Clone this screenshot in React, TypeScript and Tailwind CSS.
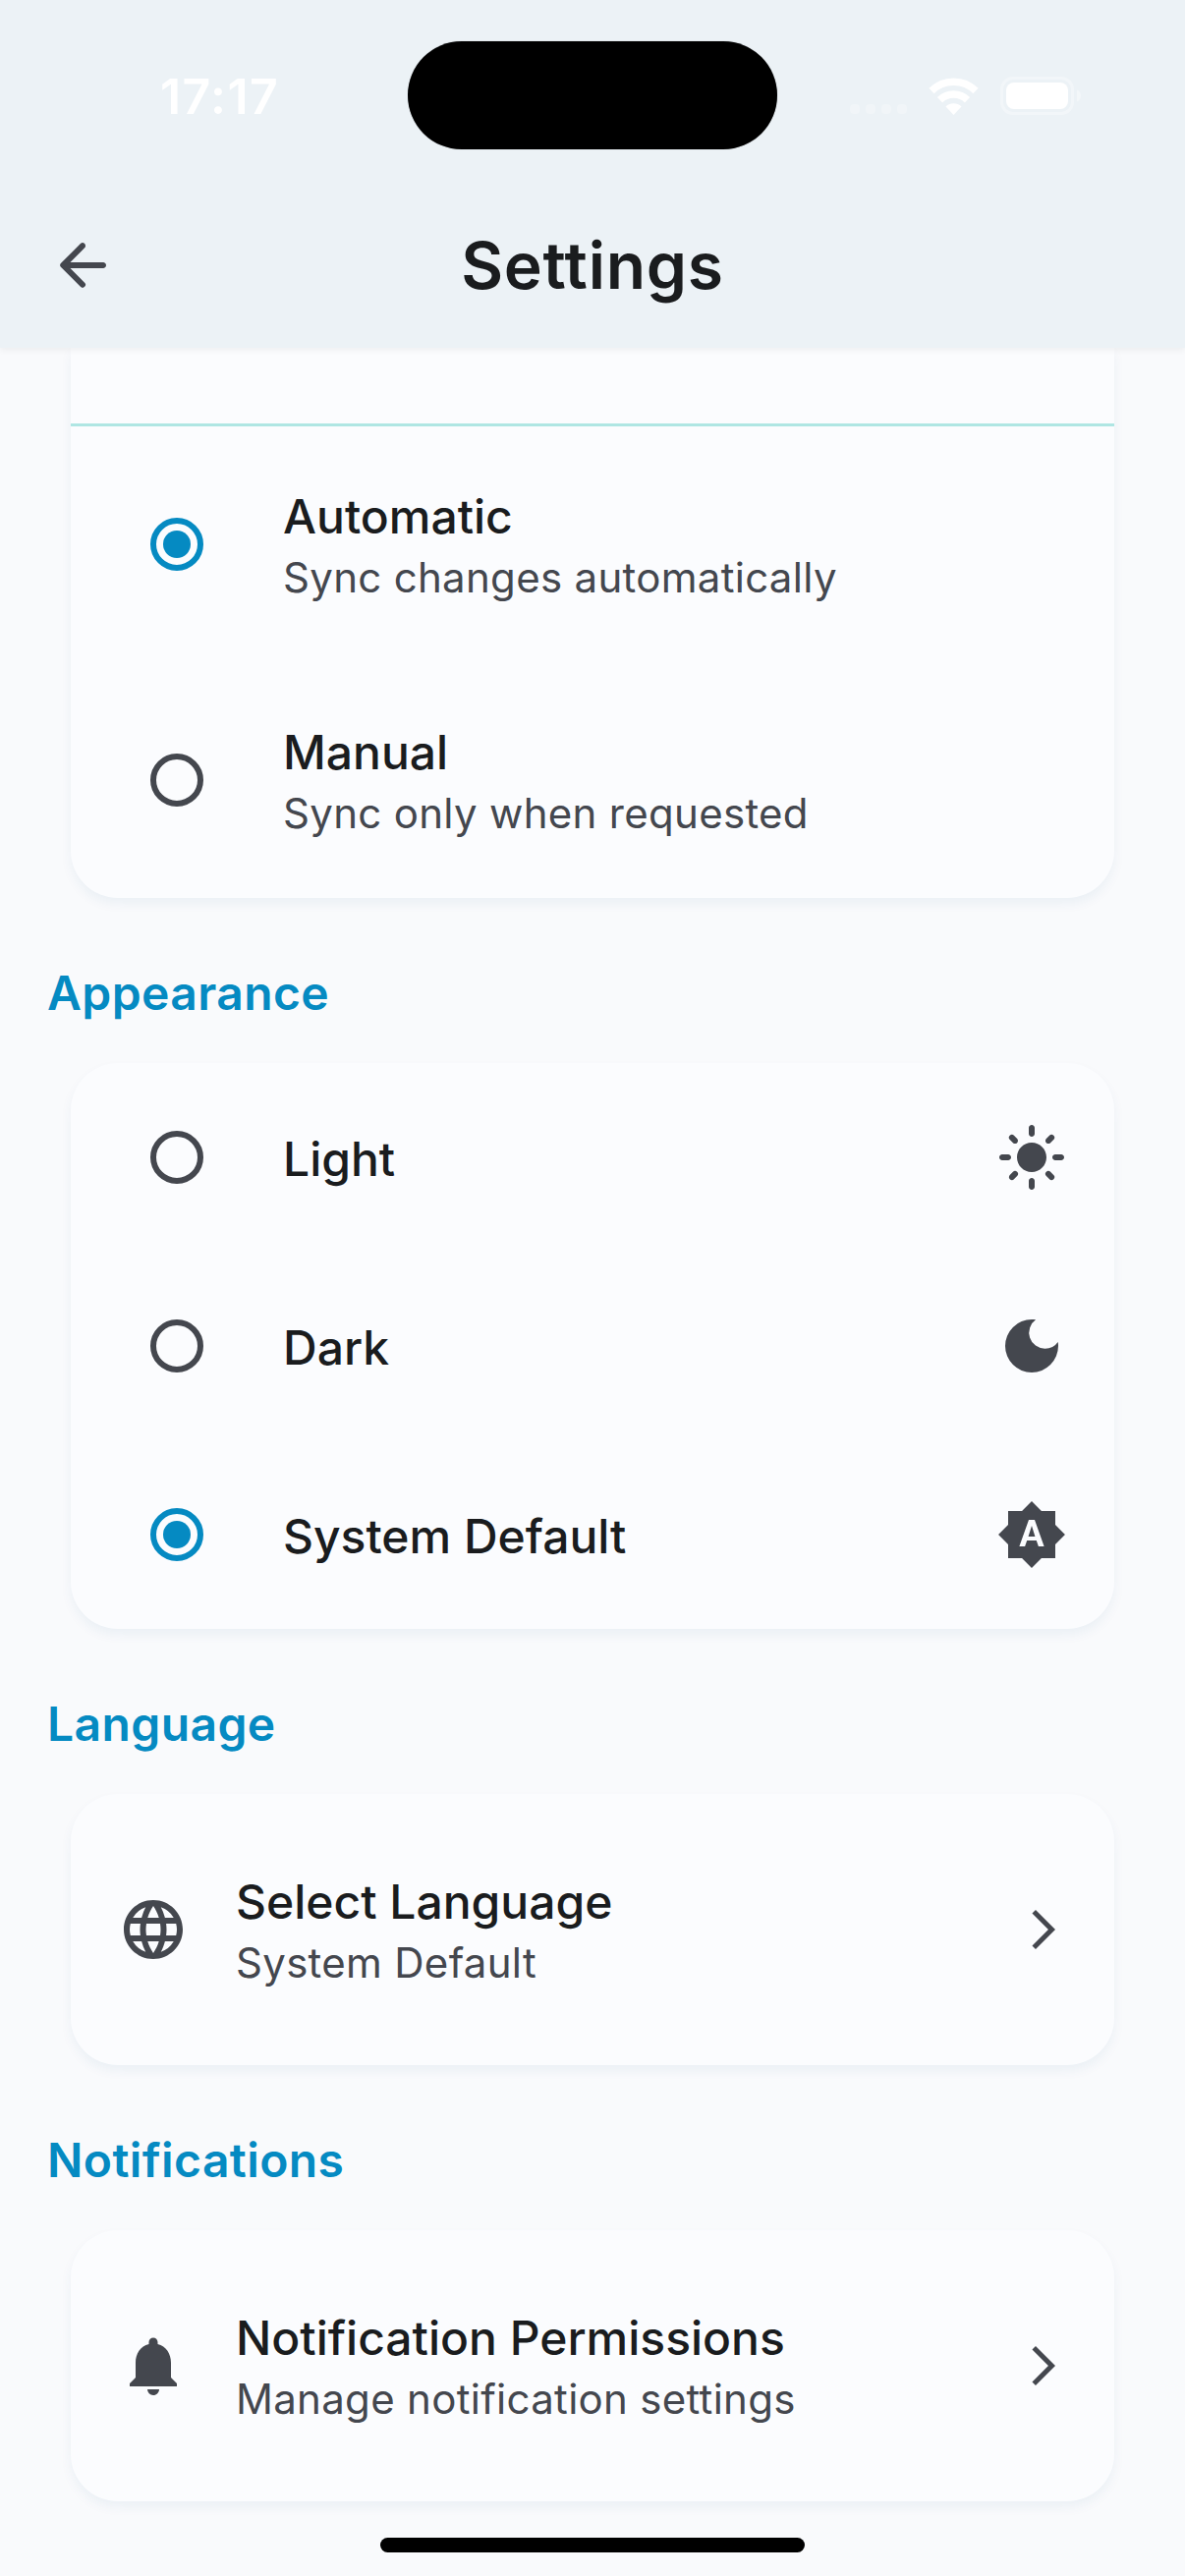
import React from "react";
import {
  MdArrowForwardIos,
  MdBrightnessAuto,
  MdDarkMode,
  MdLanguage,
  MdLightMode,
  MdNotifications,
} from "react-icons/md";

function StatusBar() {
  return (
    <div className="relative h-[186px]">
      <div className="flex h-full items-start justify-between pl-[163px] pr-[105px]">
        <div className="mt-[68px] text-[50px] font-semibold leading-[60px] tracking-[1.4px] text-white">17:17</div>
        <div className="mt-[78px] flex h-[39px] items-center">
          <div className="mt-[27px] flex gap-[6px]">
            {[0, 1, 2, 3].map((i) => (
              <span key={i} className="size-[10px] rounded-[4px] bg-white/25" />
            ))}
          </div>
          <svg className="ml-[22px] h-[38px] w-[51px]" viewBox="0 0 51 38" fill="none">
            <path d="M3 14.5a32 32 0 0 1 45 0" stroke="#fff" strokeWidth="7.5" transform="translate(0 -1)" />
            <path d="M11.5 23.2a20 20 0 0 1 28 0" stroke="#fff" strokeWidth="7.5" transform="translate(0 -.5)" />
            <path d="M17.5 29.5a11.5 11.5 0 0 1 16 0L25.5 38z" fill="#fff" />
          </svg>
          <svg className="ml-[22px] h-[39px] w-[83px]" viewBox="0 0 83 39" fill="none">
            <rect x="1.5" y="1.5" width="72" height="36" rx="11.5" stroke="#fff" strokeOpacity=".35" strokeWidth="3" />
            <rect x="6" y="6" width="63" height="27" rx="8" fill="#fff" />
            <path d="M78 13.5c2.600.9 4 3.300 4 6s-1.400 5.100-4 6z" fill="#fff" fillOpacity=".4" />
          </svg>
        </div>
      </div>
      <div className="absolute left-[415px] top-[42px] h-[110px] w-[376px] rounded-full bg-black shadow-[0_0_1px_rgba(0,0,0,0.4)]" />
    </div>
  );
}

function Header() {
  return (
    <header className="relative z-10 h-[354px] shrink-0 bg-[#ecf2f6] shadow-[0_2px_7px_rgba(0,0,0,0.06)]">
      <StatusBar />
      <div className="grid h-[168px] grid-cols-[72px_1fr_72px] items-center px-12">
        <svg className="size-[72px] text-[#44474e]" viewBox="0 0 24 24" fill="currentColor">
          <path d="M19 11H7.830l4.880-4.880c.39-.39.39-1.030 0-1.420a.996.996 0 0 0-1.410 0l-6.590 6.590a.996.996 0 0 0 0 1.410l6.590 6.590a.996.996 0 1 0 1.410-1.410L7.830 13H19c.55 0 1-.45 1-1s-.45-1-1-1z" />
        </svg>
        <h1 className="text-center text-[66px] font-semibold leading-[84px] tracking-[0.75px] text-[#1a1c1e]">
          Settings
        </h1>
      </div>
    </header>
  );
}

function Radio({ checked }: { checked?: boolean }) {
  return checked ? (
    <span className="flex size-[54px] shrink-0 items-center justify-center rounded-full border-[6px] border-[#058ac2]">
      <span className="size-7 rounded-full bg-[#058ac2]" />
    </span>
  ) : (
    <span className="size-[54px] shrink-0 rounded-full border-[6px] border-[#44474e]" />
  );
}

function Labels({ title, subtitle }: { title: string; subtitle?: string }) {
  return (
    <div className={`flex flex-1 flex-col ${subtitle ? "" : "pt-[3px]"}`}>
      <div className="text-[48px] font-medium leading-[72px] text-[#1a1c1e]">{title}</div>
      {subtitle && (
        <div className="-mt-[4px] text-[42px] leading-[60px] tracking-[0.3px] text-[#44474e]">{subtitle}</div>
      )}
    </div>
  );
}

function Card({ children, className = "" }: { children: React.ReactNode; className?: string }) {
  return (
    <section
      className={`mx-[72px] rounded-[48px] bg-[#fbfcfe] shadow-[0_6px_12px_rgba(0,90,130,0.06)] ${className}`}
    >
      {children}
    </section>
  );
}

function RadioRow({
  title,
  subtitle,
  checked,
  icon,
}: {
  title: string;
  subtitle?: string;
  checked?: boolean;
  icon?: React.ReactNode;
}) {
  return (
    <div
      className={`flex items-center gap-[81px] pl-[81px] pr-12 text-[72px] text-[#44474e] ${
        subtitle ? "h-[240px]" : "h-[192px]"
      }`}
    >
      <Radio checked={checked} />
      <Labels title={title} subtitle={subtitle} />
      {icon}
    </div>
  );
}

function LinkRow({ icon, title, subtitle }: { icon: React.ReactNode; title: string; subtitle: string }) {
  return (
    <div className="flex h-[276px] items-center px-12 text-[#44474e]">
      <span className="mr-12 text-[72px]">{icon}</span>
      <Labels title={title} subtitle={subtitle} />
      <MdArrowForwardIos className="text-[48px]" />
    </div>
  );
}

function Heading({ children }: { children: React.ReactNode }) {
  return (
    <h2 className="flex h-[168px] items-center pl-12 pt-[26px] text-[48px] font-semibold leading-[72px] tracking-[0.4px] text-[#058ac2]">
      {children}
    </h2>
  );
}

export default function App() {
  return (
    <div className="relative flex h-[2622px] w-[1206px] flex-col overflow-hidden bg-[#f9fafc] font-['Inter',sans-serif]">
      <Header />
      <main>
        <Card className="rounded-t-none">
          <div className="h-[80px] border-b-[3px] border-[#afe6e3]" />
          <RadioRow title="Automatic" subtitle="Sync changes automatically" checked />
          <RadioRow title="Manual" subtitle="Sync only when requested" />
        </Card>
        <Heading>Appearance</Heading>
        <Card>
          <RadioRow title="Light" icon={<MdLightMode />} />
          <RadioRow title="Dark" icon={<MdDarkMode />} />
          <RadioRow title="System Default" icon={<MdBrightnessAuto />} checked />
        </Card>
        <Heading>Language</Heading>
        <Card>
          <LinkRow icon={<MdLanguage />} title="Select Language" subtitle="System Default" />
        </Card>
        <Heading>Notifications</Heading>
        <Card>
          <LinkRow icon={<MdNotifications />} title="Notification Permissions" subtitle="Manage notification settings" />
        </Card>
      </main>
      <div className="absolute bottom-6 left-[387px] h-[15px] w-[432px] rounded-full bg-black" />
    </div>
  );
}
